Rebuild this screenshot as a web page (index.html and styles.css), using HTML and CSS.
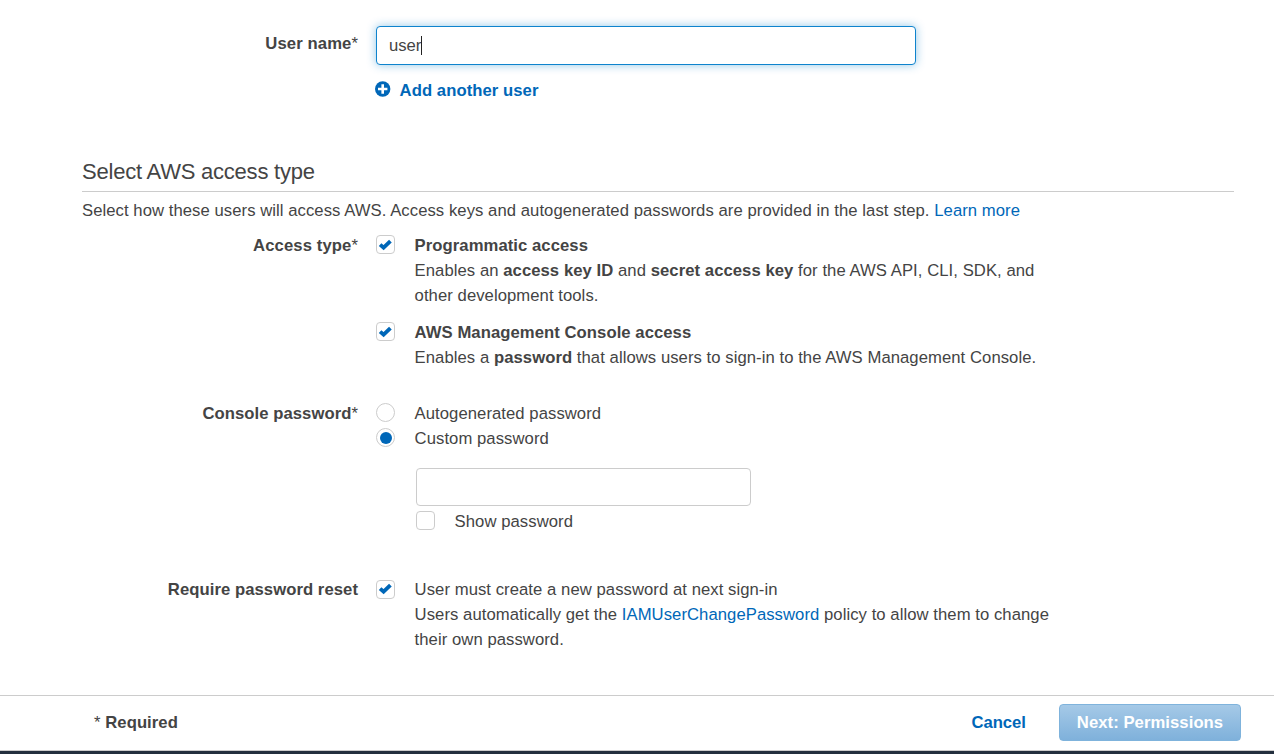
FILE: index.html
```html
<!DOCTYPE html>
<html lang="en">
<head>
<meta charset="utf-8">
<title>Add user</title>
<link rel="stylesheet" href="styles.css">
</head>
<body>
<svg class="defs" aria-hidden="true">
  <symbol id="check" viewBox="0 0 15 13"><path d="M2.1 6.6 5.6 9.7 12.4 3.2" fill="none" stroke="#0067b8" stroke-width="3.9"/></symbol>
</svg>
<main class="content">
  <div class="row row-user">
    <div class="label">User name<span class="star">*</span></div>
    <div class="field">
      <div class="input input-focus">user<span class="caret"></span></div>
      <a class="add"><svg class="plus" viewBox="0 0 16 16"><circle cx="7.7" cy="8" r="7.7" fill="#0067b8"/><path d="M7.7 3.3v9.4M3 8h9.4" stroke="#fff" stroke-width="2.6"/></svg><span>Add another user</span></a>
    </div>
  </div>

  <h2 class="heading">Select AWS access type</h2>
  <p class="intro">Select how these users will access AWS. Access keys and autogenerated passwords are provided in the last step. <a class="link">Learn more</a></p>

  <div class="row row-access">
    <div class="label">Access type<span class="star">*</span></div>
    <div class="field">
      <div class="option">
        <span class="box"><svg class="tick"><use href="#check"/></svg></span>
        <div class="text"><b>Programmatic access</b><br>Enables an <b>access key ID</b> and <b>secret access key</b> for the AWS API, CLI, SDK, and<br>other development tools.</div>
      </div>
      <div class="option option-console">
        <span class="box"><svg class="tick"><use href="#check"/></svg></span>
        <div class="text"><b>AWS Management Console access</b><br>Enables a <b>password</b> that allows users to sign-in to the AWS Management Console.</div>
      </div>
    </div>
  </div>

  <div class="row row-password">
    <div class="label">Console password<span class="star">*</span></div>
    <div class="field">
      <div class="option"><span class="box radio"></span><div class="text">Autogenerated password</div></div>
      <div class="option"><span class="box radio"><span class="dot"></span></span><div class="text">Custom password</div></div>
      <div class="custom">
        <div class="input input-password"></div>
        <div class="option"><span class="box"></span><div class="text">Show password</div></div>
      </div>
    </div>
  </div>

  <div class="row row-reset">
    <div class="label">Require password reset</div>
    <div class="field">
      <div class="option">
        <span class="box"><svg class="tick"><use href="#check"/></svg></span>
        <div class="text">User must create a new password at next sign-in<br>Users automatically get the <a class="link">IAMUserChangePassword</a> policy to allow them to change<br>their own password.</div>
      </div>
    </div>
  </div>
</main>
<footer class="footer">
  <div class="required"><span class="star">*</span> Required</div>
  <a class="cancel">Cancel</a>
  <div class="next">Next: Permissions</div>
</footer>
<div class="bar"></div>
</body>
</html>
```

FILE: styles.css
```css
* { box-sizing: border-box; }
body {
  margin: 0;
  height: 754px;
  overflow: hidden;
  display: flex;
  flex-direction: column;
  background: #fff;
  color: #444;
  font: 16.67px/25px "Liberation Sans", Arial, sans-serif;
  letter-spacing: .06px;
}
.defs { display: none; }
.content { flex: 1; padding: 26px 40px 0 82px; }
.row { display: grid; grid-template-columns: 276px 1fr; column-gap: 18px; }
.label { text-align: right; font-weight: bold; white-space: nowrap; }
.row-user .label, .row-access .label { letter-spacing: .1px; }
.star { font-weight: normal; }
.text, .intro { white-space: nowrap; }
.text { margin-left: -.4px; }
.link { color: #0067b8; }
.row-user .label { padding-top: 5px; }
.input { border: 1px solid #ccc; border-radius: 4px; background: #fff; }
.input-focus {
  width: 540px;
  height: 39px;
  padding: 6px 12px;
  display: flex;
  align-items: center;
  border-color: #0e83cd;
  box-shadow: 0 0 10px rgba(14, 131, 205, .45);
  letter-spacing: 0;
}
.caret { width: 1px; height: 19px; background: #222; }
.add {
  display: flex;
  align-items: center;
  gap: 8.6px;
  margin: 13px 0 0 -1px;
  color: #0067b8;
  font-weight: bold;
}
.plus { width: 16px; height: 16px; margin-top: -3px; }
.heading {
  margin: 53px 0 0;
  height: 36px;
  border-bottom: 1px solid #ccc;
  font-size: 22px;
  font-weight: normal;
  line-height: 31px;
  letter-spacing: -.22px;
}
.intro { margin: 6px 0 0; }
.row-access { margin-top: 10px; }
.option { display: grid; grid-template-columns: 19px 1fr; column-gap: 20px; }
.option-console { margin-top: 12px; }
.box {
  width: 19px;
  height: 19px;
  margin-top: 2px;
  display: grid;
  place-items: center;
  border: 1px solid #ccc;
  border-radius: 4px;
}
.tick { width: 15px; height: 13px; margin: 0 1px 1px 0; }
.radio { border-radius: 50%; }
.dot { width: 12px; height: 12px; border-radius: 50%; background: #0067b8; }
.row-password { margin-top: 31px; }
.custom { margin: 17px 0 0 40px; }
.input-password { width: 335px; height: 38px; margin-bottom: 3px; }
.row-reset { margin-top: 43px; }
.row-reset .box { margin-top: 3px; }
.row-reset .tick { margin-bottom: 2px; }
.footer {
  height: 55px;
  padding: 0 33px 1px 94px;
  display: flex;
  align-items: center;
  border-top: 1px solid #ccc;
  font-weight: bold;
}
.required { flex: 1; }
.cancel { margin-right: 33px; color: #0067b8; letter-spacing: 0; }
.next {
  width: 182px;
  height: 37px;
  border: 1px solid #7fb3dc;
  border-radius: 4px;
  background: linear-gradient(#a5c9e7, #7fb1db);
  color: #fff;
  text-align: center;
  line-height: 35px;
}
.bar { height: 4px; border-top: 1px solid #ccc; background: #232f3e; }
```
